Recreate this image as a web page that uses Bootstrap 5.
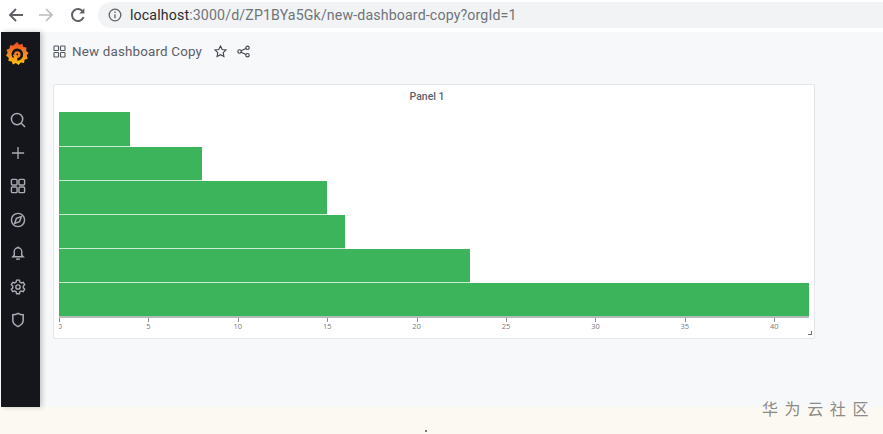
<!doctype html>
<html lang="en">
<head>
<meta charset="utf-8">
<title>New dashboard Copy</title>
<link href="https://cdn.jsdelivr.net/npm/bootstrap@5.3.0/dist/css/bootstrap.min.css" rel="stylesheet">
<style>
html,body{height:434px;overflow:hidden;background:#fff;font-family:"Open Sans","Liberation Sans",sans-serif}
.shell{width:883px;height:434px}
.chrome-bar{height:32px;padding-left:6px;padding-bottom:3px;background:#fff}
.chrome-btn{width:20px;height:28px;flex:none}
.chrome-btn svg{width:18px;height:18px}
.fwd{margin-left:10px}.reload{margin-left:11px}
.reload svg{margin-left:1px}
.url-pill{flex:1;height:26px;margin-left:11px;background:#f1f3f4;border-radius:13px 0 0 13px;padding-left:10px;font:14.2px "Roboto","Liberation Sans",sans-serif;color:#70757a;letter-spacing:.13px}
.url-host{color:#2b2d30}
.url-icon{width:14px;height:14px;margin-right:8px}
.workspace{height:375px;padding-left:1px}
.side-rail{width:39px;flex:none;background:#15161b;box-shadow:2px 0 5px rgba(0,0,0,.22);z-index:1;padding-right:5px}
.rail-logo{height:43px;padding-top:1px;padding-right:2px}
.rail-logo svg{width:24px;height:26px}
.rail-gap{height:28px}
.rail-item{height:33.4px;flex:none}
.rail-item svg{width:16px;height:16px}
.dash-main{flex:1;background:#f7f8fa;padding-left:13px}
.dash-head{height:52px;padding-bottom:14px;color:#5b6068;font:13.4px "Roboto","Liberation Sans",sans-serif}
.dash-head svg{width:13px;height:13px}
.dash-title{margin-left:6px;margin-right:12px;letter-spacing:.17px}
.share-ic{margin-left:10px}
.viz-panel{width:762px;height:255px;background:#fff;border:1px solid #e4e6ea;border-radius:2px;padding:0 5px 0 5px;position:relative}
.viz-title{height:27px;padding-top:5px;padding-right:14px;font:500 10.5px "Roboto","Liberation Sans",sans-serif;color:#5c6068;text-align:center}
.bar-stack{height:206px;border-bottom:2px solid #b4bcb7;width:750px}
.hbar{height:34px;background:#3cb45c;border-bottom:1px solid #cdead4;flex:none}
.hbar:first-child{height:35px}
.hbar:last-child{height:33px;border-bottom:0}
.tick-row{width:751px;height:18px}
.tick-cell{flex:none;position:relative;height:18px}
.tick-cell::before{content:"";display:block;width:1px;height:4px;background:#8a8f96}
.tick-lab{display:block;width:24px;margin-left:-12px;text-align:center;font:7.5px/9px "Open Sans","Liberation Sans",sans-serif;color:#75797e}
.tick-cell.first .tick-lab{width:3px;margin-left:0;overflow:hidden;text-align:left;direction:rtl}
.grip{position:absolute;right:2px;bottom:3px;width:4px;height:4px;border-right:1px solid #70757d;border-bottom:1px solid #70757d}
.bottom-strip{height:27px;background:#fcf9f2;position:relative}
.strip-dot{width:2px;height:2px;background:#777;position:absolute;left:425px;top:23px}
.wm{position:absolute;left:762px;top:396px;font:16px "Noto Sans CJK SC","Liberation Sans",sans-serif;color:#8b8b88;letter-spacing:6.6px;white-space:nowrap;z-index:2}
</style>
</head>
<body>
<div class="shell d-flex flex-column position-relative">
  <div class="chrome-bar d-flex align-items-center">
    <span class="chrome-btn d-flex align-items-center justify-content-center"><svg viewBox="0 0 18 18" fill="none" stroke="#5f6368" stroke-width="1.9"><path d="M16 9H3M9 3 3 9l6 6"/></svg></span>
    <span class="chrome-btn fwd d-flex align-items-center justify-content-center"><svg viewBox="0 0 18 18" fill="none" stroke="#b9bcc0" stroke-width="1.7"><path d="M2 9h13M9 3l6 6-6 6"/></svg></span>
    <span class="chrome-btn reload d-flex align-items-center justify-content-center"><svg viewBox="0 0 18 18" fill="none" stroke="#5f6368" stroke-width="2"><path d="M14.6 11.2A6 6 0 1 1 14 5.6"/><path d="M15.4 2.2v5.2h-5.2z" fill="#5f6368" stroke="none"/></svg></span>
    <div class="url-pill d-flex align-items-center">
      <svg class="url-icon" viewBox="0 0 14 14" fill="none" stroke="#5f6368" stroke-width="1.3"><circle cx="7" cy="7" r="5.8"/><path d="M7 6.2v4M7 3.6v1.4"/></svg>
      <span><span class="url-host">localhost</span>:3000/d/ZP1BYa5Gk/new-dashboard-copy?orgId=1</span>
    </div>
  </div>
  <div class="workspace d-flex">
    <nav class="side-rail d-flex flex-column align-items-center">
      <div class="rail-logo d-flex align-items-center justify-content-center">
        <svg viewBox="0 0 24 26"><defs><linearGradient id="gf" x1="0" y1="1" x2="0" y2="0"><stop offset="0" stop-color="#fcc40f"/><stop offset=".55" stop-color="#f58220"/><stop offset="1" stop-color="#e8492a"/></linearGradient></defs><path fill="url(#gf)" d="M12 1l2.400 2.700 3-1 .9 3.200 3.200.6-.4 3.300L23.500 12l-1.800 2.600 1 3.100-3.100 1-.6 3.200-3.200-.3L13.500 24l-2.700-1.900-2.900 1.300-1.200-3-3.200-.4.200-3.300L1 14.500l1.700-2.800-1.200-3 3-1.200.5-3.200 3.200.2z"/><path fill="none" stroke="#15161b" stroke-width="1.500" d="M8.500 16.500a5 5 0 1 1 7.500.2"/><path d="M8 13.500a4.300 4.300 0 1 1 4.300 4.800" fill="none" stroke="#15161b" stroke-width="2.800"/><path d="M9.800 13.400a2.500 2.500 0 1 1 2.500 2.600" fill="none" stroke="#f47b20" stroke-width="1.500"/><circle cx="12.300" cy="13.400" r=".9" fill="#15161b"/></svg>
      </div>
      <div class="rail-gap"></div>
      <div class="rail-item d-flex align-items-center justify-content-center"><svg viewBox="0 0 17 17" fill="none" stroke="#a9adb3" stroke-width="1.6"><circle cx="7.500" cy="7.500" r="6"/><path d="M12 12l4 4"/></svg></div>
      <div class="rail-item d-flex align-items-center justify-content-center"><svg viewBox="0 0 17 17" fill="none" stroke="#a9adb3" stroke-width="1.4"><path d="M8.500 2v13M2 8.500h13"/></svg></div>
      <div class="rail-item d-flex align-items-center justify-content-center"><svg viewBox="0 0 17 17" fill="none" stroke="#a9adb3" stroke-width="1.5"><rect x="1.500" y="1.500" width="6" height="6" rx="1"/><rect x="9.500" y="1.500" width="6" height="6" rx="1"/><rect x="1.500" y="9.500" width="6" height="6" rx="1"/><rect x="9.500" y="9.500" width="6" height="6" rx="1"/></svg></div>
      <div class="rail-item d-flex align-items-center justify-content-center"><svg viewBox="0 0 17 17" fill="none" stroke="#a9adb3" stroke-width="1.5"><circle cx="8.500" cy="8.500" r="7"/><path d="M12 5l-1.800 5.200L5 12l1.800-5.200z"/></svg></div>
      <div class="rail-item d-flex align-items-center justify-content-center"><svg viewBox="0 0 17 17" fill="none" stroke="#a9adb3" stroke-width="1.5"><path d="M8.500 1.500v1.300M4.500 11V7a4 4 0 0 1 8 0v4l1.500 1.500H3z"/><path d="M6.500 15h4"/></svg></div>
      <div class="rail-item d-flex align-items-center justify-content-center"><svg viewBox="0 0 17 17" fill="none" stroke="#a9adb3" stroke-width="1.5"><circle cx="8.500" cy="8.500" r="2.300"/><path d="M7 1.200h3l.5 2.100 1.600.9 2-.7 1.500 2.600-1.500 1.400v1.900l1.500 1.400-1.500 2.600-2-.7-1.600.9-.5 2.100H7l-.5-2.100-1.600-.9-2 .7-1.500-2.600 1.500-1.400V7.500L1.400 6.100l1.500-2.600 2 .7 1.600-.9z"/></svg></div>
      <div class="rail-item d-flex align-items-center justify-content-center"><svg viewBox="0 0 17 17" fill="none" stroke="#a9adb3" stroke-width="1.6"><path d="M8.500 1.500c2 1.200 3.800 1.500 5.500 1.500v6c0 3-2.500 5-5.500 6.500C5.500 14 3 12 3 9V3c1.700 0 3.500-.3 5.500-1.500z"/></svg></div>
    </nav>
    <main class="dash-main">
      <div class="dash-head d-flex align-items-center">
        <svg viewBox="0 0 13 13" fill="none" stroke="#52575f" stroke-width="1.1"><rect x="1" y="1" width="4.500" height="4.500" rx=".6"/><rect x="7.500" y="1" width="4.500" height="4.500" rx=".6"/><rect x="1" y="7.500" width="4.500" height="4.500" rx=".6"/><rect x="7.500" y="7.500" width="4.500" height="4.500" rx=".6"/></svg>
        <span class="dash-title">New dashboard Copy</span>
        <svg viewBox="0 0 13 13" fill="none" stroke="#3f444b" stroke-width="1.1"><path d="M6.500 1l1.700 3.500 3.800.5-2.800 2.700.7 3.800-3.400-1.800-3.400 1.800.7-3.800L1 5l3.800-.5z"/></svg>
        <svg class="share-ic" viewBox="0 0 13 13" fill="none" stroke="#3f444b" stroke-width="1.1"><circle cx="2.500" cy="6.500" r="1.700"/><circle cx="10.500" cy="2.800" r="1.700"/><circle cx="10.500" cy="10.200" r="1.700"/><path d="M4 5.800l5-2.300M4 7.200l5 2.300"/></svg>
      </div>
      <section class="viz-panel">
        <div class="viz-title">Panel 1</div>
        <div class="bar-stack d-flex flex-column">
          <div class="hbar" style="width:9.52%"></div>
          <div class="hbar" style="width:19.05%"></div>
          <div class="hbar" style="width:35.71%"></div>
          <div class="hbar" style="width:38.1%"></div>
          <div class="hbar" style="width:54.76%"></div>
          <div class="hbar" style="width:100%"></div>
        </div>
        <div class="tick-row d-flex">
          <div class="tick-cell first" style="width:11.905%"><span class="tick-lab">0</span></div>
          <div class="tick-cell" style="width:11.905%"><span class="tick-lab">5</span></div>
          <div class="tick-cell" style="width:11.905%"><span class="tick-lab">10</span></div>
          <div class="tick-cell" style="width:11.905%"><span class="tick-lab">15</span></div>
          <div class="tick-cell" style="width:11.905%"><span class="tick-lab">20</span></div>
          <div class="tick-cell" style="width:11.905%"><span class="tick-lab">25</span></div>
          <div class="tick-cell" style="width:11.905%"><span class="tick-lab">30</span></div>
          <div class="tick-cell" style="width:11.905%"><span class="tick-lab">35</span></div>
          <div class="tick-cell" style="width:4.76%"><span class="tick-lab">40</span></div>
        </div>
        <span class="grip"></span>
      </section>
    </main>
  </div>
  <div class="bottom-strip"><span class="strip-dot"></span></div>
  <div class="wm">华为云社区</div>
</div>
<script src="https://cdn.jsdelivr.net/npm/bootstrap@5.3.0/dist/js/bootstrap.bundle.min.js"></script>
</body>
</html>
